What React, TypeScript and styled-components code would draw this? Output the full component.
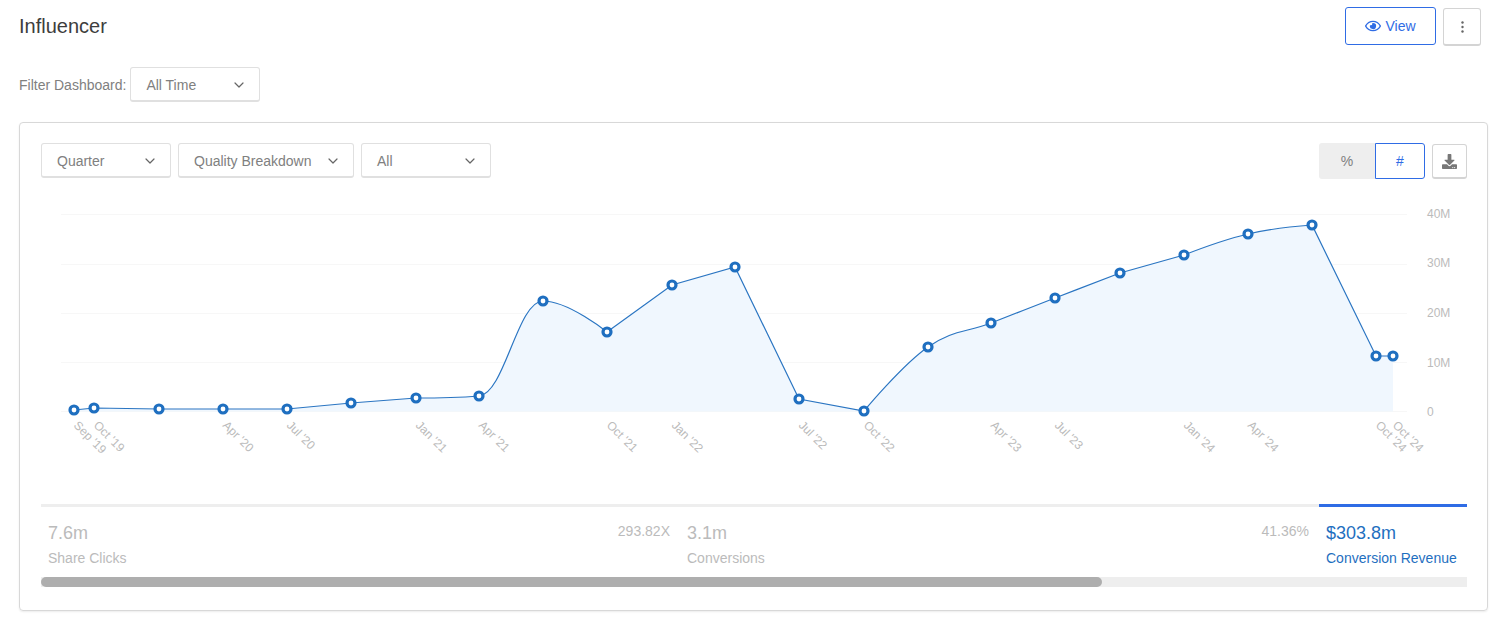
import { FC } from "react";
import styled, { createGlobalStyle } from "styled-components";
import { ChevronDown } from "lucide-react";
import { FaDownload, FaRegEye } from "react-icons/fa";

const GlobalStyle = createGlobalStyle`
  html, body {
    margin: 0;
    background: #fff;
    font-family: "Liberation Sans", Arial, sans-serif;
  }
  * {
    box-sizing: border-box;
  }
`;

const Page = styled.div`
  width: 1507px;
  height: 628px;
  padding: 7px 19px 0;
  overflow: hidden;
`;

const Header = styled.header`
  display: flex;
  justify-content: space-between;
  align-items: flex-start;
  height: 39px;
  padding-right: 7px;
`;

const Title = styled.h1`
  margin: 8px 0 0;
  font-size: 20px;
  line-height: 23px;
  font-weight: 400;
  color: #3d3d3d;
`;

const HeaderActions = styled.div`
  display: flex;
  gap: 7px;
`;

const ViewButton = styled.button`
  display: flex;
  align-items: center;
  justify-content: center;
  gap: 4px;
  width: 91px;
  height: 38px;
  padding: 0;
  background: #fff;
  border: 1px solid #2f6ce5;
  border-radius: 3px;
  color: #2f6ce5;
  font: 14px "Liberation Sans", Arial, sans-serif;
`;

const IconButton = styled.button<{ $size: number }>`
  display: flex;
  align-items: center;
  justify-content: center;
  width: ${(p) => p.$size}px;
  height: ${(p) => (p.$size === 38 ? 38 : 35)}px;
  margin-top: 1px;
  padding: 0;
  background: #fff;
  border: 1px solid #d4d4d4;
  border-bottom-width: 2px;
  border-radius: 3px;
  color: #777;
`;

const FilterRow = styled.div`
  display: flex;
  align-items: center;
  gap: 4px;
  margin-top: 21px;
  font-size: 14px;
  color: #808080;
`;

const Select = styled.div<{ $width: number }>`
  display: flex;
  align-items: center;
  justify-content: space-between;
  width: ${(p) => p.$width}px;
  height: 35px;
  padding: 1px 12px 0 15px;
  background: #fff;
  border: 1px solid #e0e0e0;
  border-bottom-width: 2px;
  border-radius: 3px;
  font-size: 14px;
  color: #808080;
`;

const Card = styled.section`
  width: 1469px;
  height: 489px;
  margin-top: 20px;
  padding: 20px 20px 0 21px;
  border: 1px solid #d8d8d8;
  border-radius: 4px;
  box-shadow: 0 1px 2px rgba(0, 0, 0, 0.08);
`;

const Toolbar = styled.div`
  display: flex;
  justify-content: space-between;
`;

const SelectGroup = styled.div`
  display: flex;
  gap: 7px;
`;

const ToolbarRight = styled.div`
  display: flex;
  gap: 7px;
`;

const Toggle = styled.div`
  display: flex;
  height: 36px;
`;

const ToggleItem = styled.div<{ $active?: boolean }>`
  display: flex;
  align-items: center;
  justify-content: center;
  width: ${(p) => (p.$active ? 50 : 56)}px;
  font-size: 14px;
  background: ${(p) => (p.$active ? "#fff" : "#eee")};
  color: ${(p) => (p.$active ? "#2f6ce5" : "#808080")};
  border: ${(p) => (p.$active ? "1px solid #2f6ce5" : "none")};
  border-radius: ${(p) => (p.$active ? "0 3px 3px 0" : "3px 0 0 3px")};
`;

const ChartSvg = styled.svg`
  display: block;
  width: 1426px;
  height: 310px;
  margin-top: 11px;
  font-family: "Liberation Sans", Arial, sans-serif;
`;

const Stats = styled.div`
  display: grid;
  grid-template-columns: 639px 639px 148px;
  margin-top: 4px;
  height: 73px;
`;

const Stat = styled.div<{ $active?: boolean }>`
  position: relative;
  padding: 16px 7px 0;
  border-top: 3px solid ${(p) => (p.$active ? "#2f6ce5" : "#eee")};
  color: ${(p) => (p.$active ? "#1f6fc0" : "#bbb")};
`;

const StatValue = styled.div`
  font-size: 18px;
  line-height: 21px;
`;

const StatLabel = styled.div`
  margin-top: 6px;
  font-size: 14px;
  line-height: 16px;
`;

const StatRatio = styled.div`
  position: absolute;
  top: 16px;
  right: 10px;
  font-size: 14px;
  line-height: 16px;
  color: #bbb;
`;

const ScrollTrack = styled.div`
  height: 10px;
  background: #eee;
`;

const ScrollThumb = styled.div`
  width: 1061px;
  height: 10px;
  background: #aeaeae;
  border-radius: 5px;
`;

type Pt = [number, number];

const points: Pt[] = [
  [74, 410], [94, 408], [159, 409], [223, 409], [287, 409], [351, 403],
  [416, 398], [479, 396], [543, 301], [607, 332], [672, 285], [735, 267],
  [799, 399], [864, 411], [928, 347], [991, 323], [1055, 298], [1120, 273],
  [1184, 255], [1248, 234], [1312, 225], [1376, 356], [1393, 356],
];

// the line only bends at these points, every other point is a plain corner
const smoothAt = new Set([479, 543, 928, 991, 1055, 1248]);

const ticks: [number, string][] = [
  [74, "Sep '19"], [94, "Oct '19"], [223, "Apr '20"], [287, "Jul '20"],
  [416, "Jan '21"], [479, "Apr '21"], [607, "Oct '21"], [672, "Jan '22"],
  [799, "Jul '22"], [864, "Oct '22"], [991, "Apr '23"], [1055, "Jul '23"],
  [1184, "Jan '24"], [1248, "Apr '24"], [1376, "Oct '24"], [1393, "Oct '24"],
];

// grid line y, label baseline y, label
const gridLines: [number, number, string][] = [
  [214, 218, "40M"], [264, 267, "30M"], [313, 317, "20M"], [362, 367, "10M"], [411, 416, "0"],
];

const controls = (i: number): [Pt, Pt] => {
  const [x, y] = points[i];
  const prev = points[i - 1];
  const next = points[i + 1];
  if (!prev || !next || !smoothAt.has(x)) return [[x, y], [x, y]];
  const s = 1.5;
  const lx = (s * x + prev[0]) / (s + 1);
  let ly = (s * y + prev[1]) / (s + 1);
  const rx = (s * x + next[0]) / (s + 1);
  let ry = (s * y + next[1]) / (s + 1);
  const c = ((ry - ly) * (rx - x)) / (rx - lx) + y - ry;
  ly += c;
  ry += c;
  if (ly > prev[1] && ly > y) {
    ly = Math.max(prev[1], y);
    ry = 2 * y - ly;
  } else if (ly < prev[1] && ly < y) {
    ly = Math.min(prev[1], y);
    ry = 2 * y - ly;
  }
  if (ry > next[1] && ry > y) {
    ry = Math.max(next[1], y);
    ly = 2 * y - ry;
  } else if (ry < next[1] && ry < y) {
    ry = Math.min(next[1], y);
    ly = 2 * y - ry;
  }
  return [[lx, ly], [rx, ry]];
};

const linePath = points.reduce((d, p, i) => {
  if (i === 0) return `M${p[0]} ${p[1]}`;
  const right = controls(i - 1)[1];
  const left = controls(i)[0];
  return `${d} C${right[0]} ${right[1]} ${left[0]} ${left[1]} ${p[0]} ${p[1]}`;
}, "");

const areaPath = `${linePath} L1393 411.5 L74 411.5 Z`;

const Chart: FC = () => (
  <ChartSvg viewBox="41 190 1426 310">
    {gridLines.map(([y]) => (
      <line key={y} x1={61} x2={1407} y1={y + 0.5} y2={y + 0.5} stroke="#f7f7f7" />
    ))}
    <path d={areaPath} fill="#f0f7fe" />
    <path d={linePath} fill="none" stroke="#2a75c2" strokeWidth={1.2} />
    {points.map(([x, y]) => (
      <circle key={x} cx={x} cy={y} r={4} fill="#fff" stroke="#1f6fc0" strokeWidth={3.2} />
    ))}
    {gridLines.map(([, base, label]) => (
      <text key={label} x={1427} y={base} fontSize={12} fill="#bbb">
        {label}
      </text>
    ))}
    {ticks.map(([x, label]) => (
      <text
        key={`${x}${label}`}
        x={x - 1}
        y={426}
        fontSize={12}
        fill="#bbb"
        transform={`rotate(45 ${x - 1} 426)`}
      >
        {label}
      </text>
    ))}
  </ChartSvg>
);

const Dropdown: FC<{ label: string; width: number }> = ({ label, width }) => (
  <Select $width={width}>
    {label}
    <ChevronDown size={16} strokeWidth={1.8} color="#666" />
  </Select>
);

const App: FC = () => {
  return (
    <Page>
      <GlobalStyle />
      <Header>
        <Title>Influencer</Title>
        <HeaderActions>
          <ViewButton>
            <FaRegEye size={16} />
            View
          </ViewButton>
          <IconButton $size={38}>
            <svg width="3" height="12" viewBox="0 0 3 12" fill="#666">
              <circle cx="1.5" cy="1.5" r="1.2" />
              <circle cx="1.5" cy="6" r="1.2" />
              <circle cx="1.5" cy="10.5" r="1.2" />
            </svg>
          </IconButton>
        </HeaderActions>
      </Header>
      <FilterRow>
        Filter Dashboard:
        <Dropdown label="All Time" width={130} />
      </FilterRow>
      <Card>
        <Toolbar>
          <SelectGroup>
            <Dropdown label="Quarter" width={130} />
            <Dropdown label="Quality Breakdown" width={176} />
            <Dropdown label="All" width={130} />
          </SelectGroup>
          <ToolbarRight>
            <Toggle>
              <ToggleItem>%</ToggleItem>
              <ToggleItem $active>#</ToggleItem>
            </Toggle>
            <IconButton $size={35}>
              <FaDownload size={15} />
            </IconButton>
          </ToolbarRight>
        </Toolbar>
        <Chart />
        <Stats>
          <Stat>
            <StatValue>7.6m</StatValue>
            <StatLabel>Share Clicks</StatLabel>
            <StatRatio>293.82X</StatRatio>
          </Stat>
          <Stat>
            <StatValue>3.1m</StatValue>
            <StatLabel>Conversions</StatLabel>
            <StatRatio>41.36%</StatRatio>
          </Stat>
          <Stat $active>
            <StatValue>$303.8m</StatValue>
            <StatLabel>Conversion Revenue</StatLabel>
          </Stat>
        </Stats>
        <ScrollTrack>
          <ScrollThumb />
        </ScrollTrack>
      </Card>
    </Page>
  );
};

export default App;
